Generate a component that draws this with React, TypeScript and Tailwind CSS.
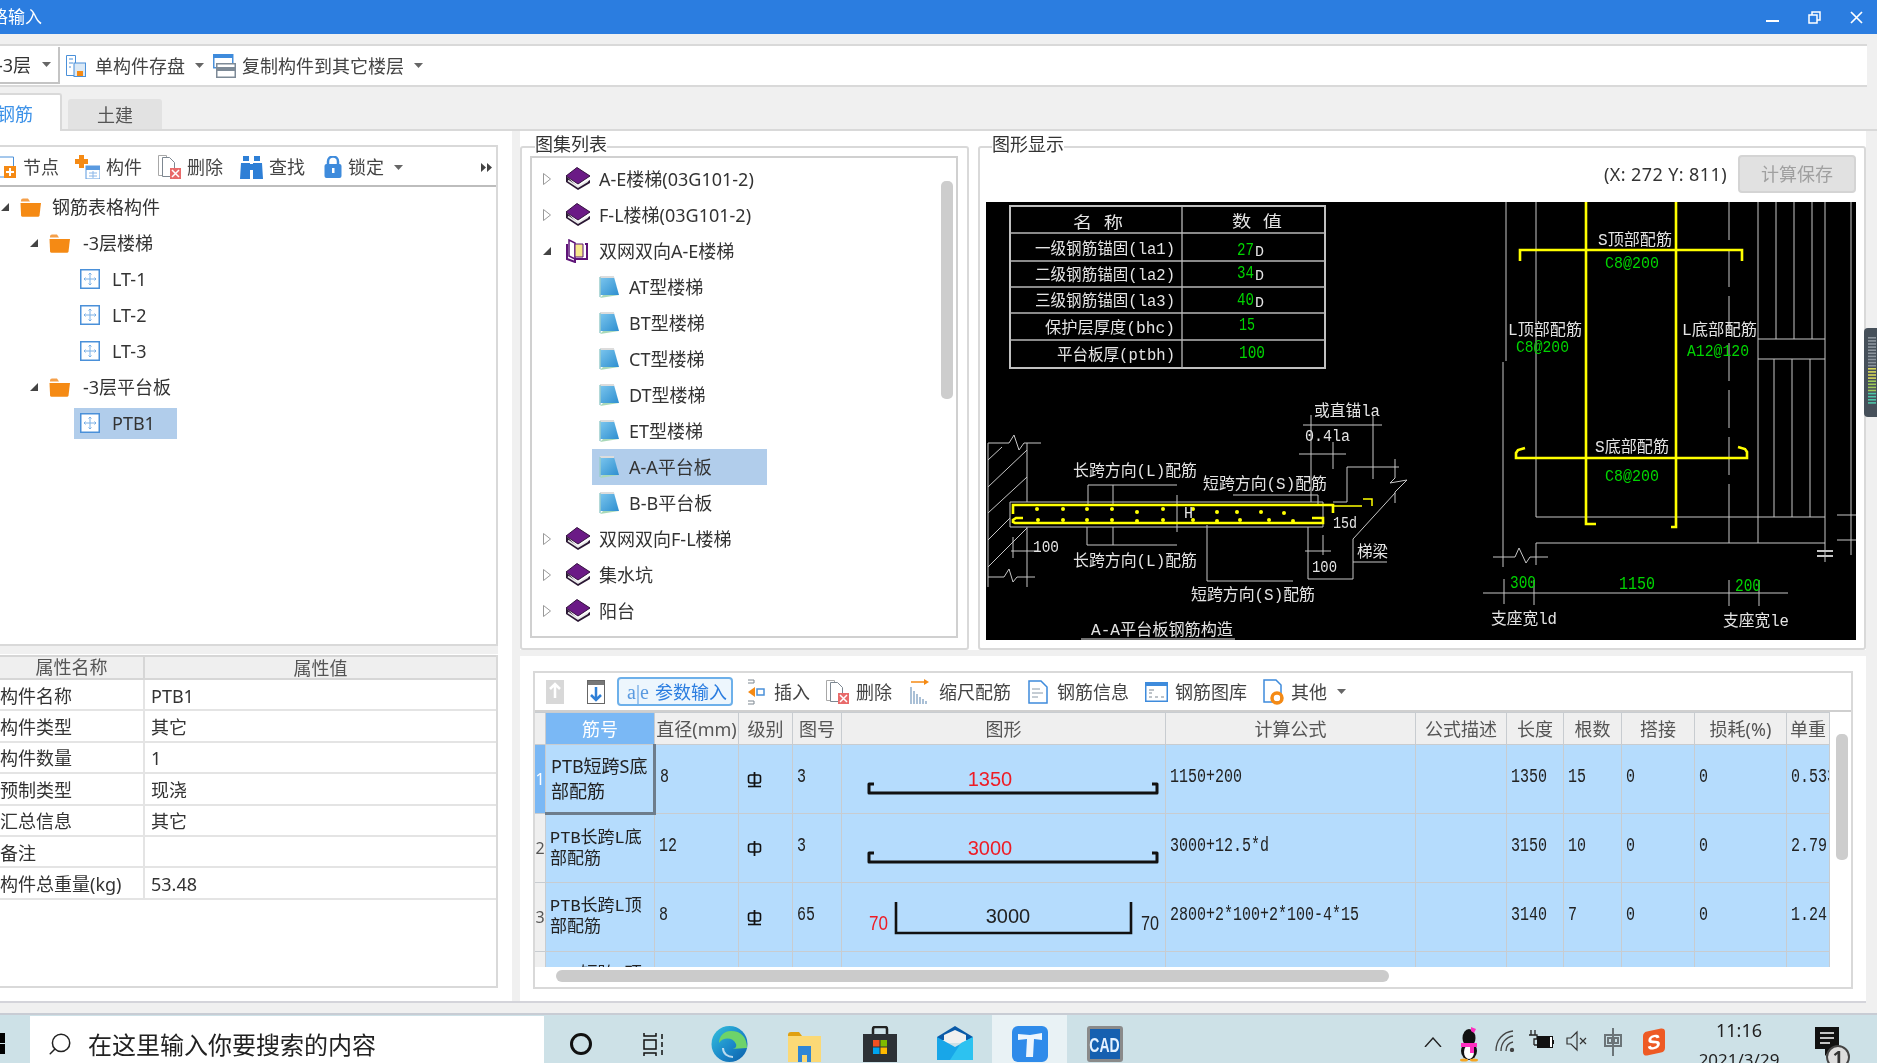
import { Search } from "lucide-react";

const Caret = ({ className = "" }: { className?: string }) => (
  <svg width="9" height="5" viewBox="0 0 9 5" className={className}>
    <path d="M0 0h9L4.5 5z" fill="#666" />
  </svg>
);

const FolderIcon = () => (
  <svg width="22" height="19" viewBox="0 0 22 19" className="shrink-0">
    <path d="M1 2.5Q1 0.5 3 0.5h5l2 3h-9z" fill="#f5a04a" />
    <path d="M0.5 5h20.5l-1.5 12.5q-.2 1.3-1.5 1.3H2.5q-1.2 0-1.4-1.3z" fill="#f58a14" />
  </svg>
);

const ComponentIcon = () => (
  <svg width="20" height="20" viewBox="0 0 20 20" className="shrink-0">
    <rect x="0.75" y="0.75" width="18.5" height="18.5" fill="#fff" stroke="#4a90d9" strokeWidth="1.5" />
    <path d="M10 4v12M4 10h12M8.5 5.5 10 4l1.5 1.5M8.5 14.5 10 16l1.5-1.5M5.5 8.5 4 10l1.5 1.5M14.5 8.5 16 10l-1.5 1.5" fill="none" stroke="#7ab0e6" strokeWidth="1" />
  </svg>
);

const BookIcon = () => (
  <svg width="26" height="24" viewBox="0 0 26 24" className="shrink-0">
    <path d="M12 0.5 25 9 13 17 1 9z" fill="#6b1a86" stroke="#34123f" />
    <path d="M1 9v6l12 8 12-7v-3l-12 7z" fill="#2a1733" />
    <path d="M3 13.5 13 20l10-6" fill="none" stroke="#e8e8e8" strokeWidth="1.5" />
  </svg>
);

const OpenBookIcon = () => (
  <svg width="24" height="24" viewBox="0 0 24 24" className="shrink-0">
    <path d="M2 5v15l8 3v-3h12V5h-2" fill="none" stroke="#5e1478" strokeWidth="2" />
    <path d="M4 1l6 3v16l-6-3z" fill="#fff" stroke="#5e1478" strokeWidth="1.5" />
    <path d="M10 5h8v13h-8z" fill="#f7e98c" stroke="#5e1478" />
  </svg>
);

const NoteIcon = () => (
  <svg width="21" height="24" viewBox="0 0 21 24" className="shrink-0">
    <defs>
      <linearGradient id="noteFill" x1="0" y1="0" x2="1" y2="1">
        <stop offset="0" stopColor="#7cc6ee" />
        <stop offset="1" stopColor="#2e8fd0" />
      </linearGradient>
    </defs>
    <path d="M1 23 4 20h16z" fill="#a9d8b8" />
    <path d="M1 2h14l5 18H1z" fill="url(#noteFill)" />
    <path d="M1 2h14" stroke="#dcdcdc" strokeWidth="2" />
    <path d="M1 2v20" stroke="#9cc" strokeWidth="1.5" />
  </svg>
);

const SaveIcon = () => (
  <svg width="20" height="22" viewBox="0 0 20 22" className="shrink-0">
    <path d="M.5 .5h9v20h-9z" fill="#fff" stroke="#4a90d9" />
    <path d="M3 4h4M3 8h4M3 12h2" stroke="#4a90d9" />
    <rect x="8" y="8" width="11.5" height="13.5" fill="#dbe9f6" stroke="#4a90d9" />
    <rect x="11" y="16" width="6" height="5" fill="#f58a14" />
  </svg>
);

const CopyIcon = () => (
  <svg width="23" height="24" viewBox="0 0 23 24" className="shrink-0">
    <rect x=".75" y=".75" width="19" height="13" fill="#fff" stroke="#4a90d9" strokeWidth="1.5" />
    <rect x="0" y="0" width="20" height="4" fill="#3e8bdc" />
    <rect x="3.75" y="9.75" width="18.5" height="13.5" fill="#fff" stroke="#7d8a97" strokeWidth="1.5" />
    <rect x="3" y="13" width="20" height="4" fill="#7d8a97" />
  </svg>
);

const NodeIcon = () => (
  <svg width="24" height="22" viewBox="0 0 24 22" className="shrink-0 -ml-[7px]">
    <path d="M.5 1h20v20H.5z" fill="#fff" stroke="#4a90d9" />
    <rect x="11" y="10" width="12" height="12" fill="#f58a14" />
    <path d="M17 12v8M13 16h8" stroke="#fff" strokeWidth="2" />
  </svg>
);

const BuildIcon = () => (
  <svg width="25" height="24" viewBox="0 0 25 24" className="shrink-0">
    <path d="M4 0h5v4h4v5H9v4H4V9H0V4h4z" fill="#f58a14" />
    <rect x="11" y="11" width="14" height="13" fill="#fff" stroke="#5a9ae0" />
    <rect x="11" y="11" width="14" height="4" fill="#5a9ae0" />
    <path d="M14 18h8M14 21h8M18 16v7" stroke="#8ab6e8" />
  </svg>
);

const DeleteIcon = () => (
  <svg width="23" height="24" viewBox="0 0 23 24" className="shrink-0">
    <path d="M.5 .5h8v20h-8z" fill="#fff" stroke="#a8a8a8" />
    <path d="M4.5 2.5h7l5 5v14h-12z" fill="#fff" stroke="#7d8791" />
    <rect x="12" y="13" width="11" height="11" fill="#e86a6a" />
    <path d="M14 15l7 7M21 15l-7 7" stroke="#fff" strokeWidth="1.5" />
  </svg>
);

const FindIcon = () => (
  <svg width="23" height="23" viewBox="0 0 23 23" className="shrink-0">
    <path d="M3 0h6v5H3zM14 0h6v5h-6zM1 7h9v16H0zM13 7h9l1 16h-10z" fill="#2e7fd6" />
    <rect x="9" y="8" width="5" height="6" fill="#2e7fd6" />
  </svg>
);

const LockIcon = () => (
  <svg width="18" height="22" viewBox="0 0 18 22" className="shrink-0">
    <path d="M4 9V5.5a5 5 0 0 1 10 0V9" fill="none" stroke="#3e8bdc" strokeWidth="2.5" />
    <rect x="0.5" y="8" width="17" height="14" rx="2" fill="#3e8bdc" />
    <rect x="8" y="12" width="2.5" height="5" fill="#fff" />
  </svg>
);

const InsertIcon = () => (
  <svg width="19" height="26" viewBox="0 0 19 26" className="shrink-0">
    <path d="M2 1h6v3H2M2 22h6v3H2" fill="none" stroke="#7d8791" />
    <path d="M9 8 2 13l7 5v-3h0v-4z" fill="#f58a14" />
    <rect x="11" y="10" width="7" height="6" fill="#fff" stroke="#4a90d9" strokeWidth="1.5" />
  </svg>
);

const ScaleIcon = () => (
  <svg width="20" height="26" viewBox="0 0 20 26" className="shrink-0">
    <path d="M1 3h14" stroke="#f58a14" strokeWidth="1.5" />
    <path d="M14 0l5 3-5 3z" fill="#f58a14" />
    <path d="M1 8v17M4 12v13M7 15v10M10 18v7M13 20v5M16 22v3" stroke="#7d9fc0" strokeWidth="1.3" />
  </svg>
);

const InfoIcon = () => (
  <svg width="20" height="24" viewBox="0 0 20 24" className="shrink-0">
    <path d="M1 1h12l6 6v16H1z" fill="#fff" stroke="#3e8bdc" strokeWidth="1.5" />
    <path d="M4 9h8M4 13h11M4 17h6" stroke="#8a9aa8" />
  </svg>
);

const LibraryIcon = () => (
  <svg width="23" height="20" viewBox="0 0 23 20" className="shrink-0">
    <rect x=".75" y=".75" width="21.5" height="18.5" fill="#fff" stroke="#3e8bdc" strokeWidth="1.5" />
    <rect x="0" y="0" width="23" height="4" fill="#3e8bdc" />
    <path d="M4 8h5M4 11h3M4 15h3M10 15h3M16 15h3" stroke="#7d8791" />
  </svg>
);

const OtherIcon = () => (
  <svg width="21" height="26" viewBox="0 0 21 26" className="shrink-0">
    <path d="M1 1h12l5 5v17H1z" fill="#fff" stroke="#3e8bdc" strokeWidth="1.5" />
    <circle cx="14" cy="19" r="5" fill="none" stroke="#f58a14" strokeWidth="3.5" />
  </svg>
);

const LeftTool = ({ icon, label, className = "" }: { icon: React.ReactNode; label: string; className?: string }) => (
  <div className={`flex items-center gap-[6px] whitespace-nowrap ${className}`}>
    {icon}
    <span>{label}</span>
  </div>
);

const RebarSymbol = ({ base }: { base: boolean }) => (
  <svg width="15" height="17" viewBox="0 0 15 17">
    <rect x="1.5" y="4" width="12" height="8" rx="2" fill="none" stroke="#111" strokeWidth="1.6" />
    <path d="M7.5 1v15" stroke="#111" strokeWidth="1.8" />
    {base && <path d="M1 15.5h13" stroke="#111" strokeWidth="1.6" />}
  </svg>
);

const HookBar = ({ label }: { label: string }) => (
  <svg width="322" height="68" className="block font-['Liberation_Sans',sans-serif]">
    <text x="148" y="41" textAnchor="middle" fontSize="20" fill="#ee1c25">{label}</text>
    <path d="M32 39h-5v9h288v-9h-5" fill="none" stroke="#111" strokeWidth="3" strokeLinejoin="round" />
  </svg>
);

const UBar = () => (
  <svg width="322" height="68" className="block font-['Liberation_Sans',sans-serif]">
    <text x="27" y="47" fontSize="20" fill="#ee1c25" textLength="19" lengthAdjust="spacingAndGlyphs">70</text>
    <path d="M54 19v31h235V19" fill="none" stroke="#111" strokeWidth="2.6" />
    <text x="166" y="40" textAnchor="middle" fontSize="20" fill="#222">3000</text>
    <text x="299" y="47" fontSize="20" fill="#222" textLength="18" lengthAdjust="spacingAndGlyphs">70</text>
  </svg>
);

const CadText = ({ x, y, w, fill = "#e4e4e4", size = 16, children }: { x: number; y: number; w: number; fill?: string; size?: number; children: string }) => (
  <text x={x} y={y} fontSize={size} fill={fill} textLength={w} lengthAdjust="spacingAndGlyphs">
    {children}
  </text>
);

const GRAY = "#c6c6c6";
const GREEN = "#00d400";

const CadDrawing = () => {
  const topDots = [[51, 307], [77, 307], [101, 307], [126, 307], [151, 310], [177, 307], [207, 307], [231, 310], [251, 310], [275, 310], [298, 311]];
  const bottomDots = [[52, 318], [77, 318], [101, 318], [126, 318], [151, 319], [177, 318], [207, 318], [231, 319], [254, 318], [283, 318], [307, 319]];
  const grayPaths = [
    "M41 241v59M41 325v60M2 241h21l5-8 5 15 5-7h17M2 375h16l5-8 4 13 4-5h18M2 241v144",
    "M2 258l14-13M2 285l39-37M2 311l39-36M2 338l22-22M2 365l39-39",
    "M27 335v21M25 349h27M24 300h313v25H24z",
    "M102 303v-20h89M127 303v-20M247 293h85v10M191 293v37",
    "M101 325v18h90M127 325v18M221 323v56h86",
    "M322 325v52h45v-40l42-46M367 360h34M347 300h14v-35h52M409 257v19l-5 5 17-3-12 12v11",
    "M325 213v87M387 213v64M317 223h79M313 252h47M347 240v27M319 349h26M337 333v20",
    "M520 0v159M517 160v205M550 0v315h289M743 315v26M772 0v341M790 0v137M808 0v137M826 0v137M839 0v360",
    "M772 137h67M772 157h67M788 157v158M806 157v158M824 157v158M865 0v353M851 313h19M851 338h19",
    "M550 341h289M550 341v22M507 355h22l4-9 7 15 4-6h18M497 391h305M518 377v25M548 378v25M743 378v26M773 378v26",
  ];
  return (
    <svg viewBox="0 0 870 438" width="870" height="438" className="block font-['Liberation_Mono','Noto_Sans_CJK_SC',monospace]">
      <rect width="870" height="438" fill="#000" />
      <path d="M24 4h315v162H24z" fill="none" stroke="#c0c0c0" strokeWidth="2" />
      <path d="M196 4v162M24 31h315M24 59h315M24 85h315M24 111h315M24 138h315" fill="none" stroke="#b8b8b8" strokeWidth="1.3" />
      <CadText x={87} y={26} w={50}>名   称</CadText>
      <CadText x={246} y={25} w={50}>数   值</CadText>
      <CadText x={49} y={52} w={140}>一级钢筋锚固(la1)</CadText>
      <CadText x={49} y={78} w={140}>二级钢筋锚固(la2)</CadText>
      <CadText x={49} y={104} w={140}>三级钢筋锚固(la3)</CadText>
      <CadText x={59} y={131} w={130}>保护层厚度(bhc)</CadText>
      <CadText x={71} y={158} w={118}>平台板厚(ptbh)</CadText>
      <CadText x={251} y={53} w={17} size={18} fill={GREEN}>27</CadText>
      <CadText x={269} y={54} w={9} size={14}>D</CadText>
      <CadText x={251} y={76} w={17} size={18} fill={GREEN}>34</CadText>
      <CadText x={269} y={78} w={9} size={14}>D</CadText>
      <CadText x={251} y={103} w={17} size={18} fill={GREEN}>40</CadText>
      <CadText x={269} y={105} w={9} size={14}>D</CadText>
      <CadText x={253} y={128} w={16} size={18} fill={GREEN}>15</CadText>
      <CadText x={253} y={156} w={26} size={18} fill={GREEN}>100</CadText>

      <g fill="none" stroke={GRAY} strokeWidth="1">
        {grayPaths.map((d) => (
          <path key={d} d={d} />
        ))}
        <path d="M743 0v315" strokeDasharray="38 9" />
        <path d="M831 349h16M831 354h16" strokeWidth="2" />
      </g>

      <g fill="none" stroke="#ffff00" strokeWidth="2.6">
        <path d="M27 312v-9h320v8" />
        <path d="M37 316h-7l-3 2v2l2 1h308v-5h-11" />
        <path d="M347 304h29M377 297h9v7" strokeWidth="1.5" />
        <path d="M600 0v322h10M690 0v325h-5M534 59V48h222v11" />
        <path d="M539 246l-7 2-2 3v5h231v-6l-2-3-7-2" />
      </g>
      {[...topDots, ...bottomDots].map(([cx, cy]) => (
        <circle key={`${cx}-${cy}`} cx={cx} cy={cy} r="2" fill="#ffff00" />
      ))}

      <CadText x={328} y={214} w={66}>或直锚la</CadText>
      <CadText x={319} y={239} w={45}>0.4la</CadText>
      <CadText x={87} y={274} w={124}>长跨方向(L)配筋</CadText>
      <CadText x={217} y={287} w={124}>短跨方向(S)配筋</CadText>
      <CadText x={198} y={316} w={9}>H</CadText>
      <CadText x={347} y={326} w={24} size={17}>15d</CadText>
      <CadText x={47} y={350} w={26} size={17}>100</CadText>
      <CadText x={371} y={355} w={31}>梯梁</CadText>
      <CadText x={87} y={364} w={124}>长跨方向(L)配筋</CadText>
      <CadText x={326} y={370} w={25} size={17}>100</CadText>
      <CadText x={205} y={398} w={124}>短跨方向(S)配筋</CadText>
      <CadText x={105} y={433} w={142}>A-A平台板钢筋构造</CadText>
      <path d="M95 437h154" stroke="#e4e4e4" />

      <CadText x={612} y={43} w={74}>S顶部配筋</CadText>
      <CadText x={619} y={66} w={54} size={17} fill={GREEN}>C8@200</CadText>
      <CadText x={522} y={133} w={74}>L顶部配筋</CadText>
      <CadText x={530} y={150} w={53} size={17} fill={GREEN}>C8@200</CadText>
      <CadText x={696} y={133} w={75}>L底部配筋</CadText>
      <CadText x={701} y={154} w={62} size={17} fill={GREEN}>A12@120</CadText>
      <CadText x={609} y={250} w={74}>S底部配筋</CadText>
      <CadText x={619} y={279} w={54} size={17} fill={GREEN}>C8@200</CadText>
      <CadText x={524} y={386} w={26} size={18} fill={GREEN}>300</CadText>
      <CadText x={633} y={387} w={36} size={18} fill={GREEN}>1150</CadText>
      <CadText x={749} y={389} w={26} size={18} fill={GREEN}>200</CadText>
      <CadText x={505} y={422} w={66}>支座宽ld</CadText>
      <CadText x={737} y={424} w={66}>支座宽le</CadText>
    </svg>
  );
};

const openTri = (
  <svg width="8" height="8" viewBox="0 0 8 8" className="shrink-0">
    <path d="M8 0v8H0z" fill="#444" />
  </svg>
);
const closedTri = (
  <svg width="8" height="12" viewBox="0 0 8 12" className="shrink-0">
    <path d="M.5 .5 7.5 6 .5 11.5z" fill="#fff" stroke="#999" />
  </svg>
);

const atlasChildren = ["AT型楼梯", "BT型楼梯", "CT型楼梯", "DT型楼梯", "ET型楼梯", "A-A平台板", "B-B平台板"];
const props = [
  ["构件名称", "PTB1"],
  ["构件类型", "其它"],
  ["构件数量", "1"],
  ["预制类型", "现浇"],
  ["汇总信息", "其它"],
  ["备注", ""],
  ["构件总重量(kg)", "53.48"],
];
const columns = [
  { label: "筋号", w: "w-[109px]" },
  { label: "直径(mm)", w: "w-[84px]" },
  { label: "级别", w: "w-[54px]" },
  { label: "图号", w: "w-[49px]" },
  { label: "图形", w: "w-[324px]" },
  { label: "计算公式", w: "w-[250px]" },
  { label: "公式描述", w: "w-[91px]" },
  { label: "长度", w: "w-[57px]" },
  { label: "根数", w: "w-[58px]" },
  { label: "搭接", w: "w-[73px]" },
  { label: "损耗(%)", w: "w-[92px]" },
  { label: "单重", w: "w-[43px]" },
];
const rows = [
  { n: "1", name: ["PTB短跨S底", "部配筋"], d: "8", base: true, fig: "3", shape: <HookBar label="1350" />, formula: "1150+200", len: "1350", count: "15", unit: "0.533", h: "h-[69px]" },
  { n: "2", name: ["PTB长跨L底", "部配筋"], d: "12", base: false, fig: "3", shape: <HookBar label="3000" />, formula: "3000+12.5*d", len: "3150", count: "10", unit: "2.79", h: "h-[69px]" },
  { n: "3", name: ["PTB长跨L顶", "部配筋"], d: "8", base: true, fig: "65", shape: <UBar />, formula: "2800+2*100+2*100-4*15", len: "3140", count: "7", unit: "1.24", h: "h-[68px]" },
  { n: "4", name: ["PTB短跨S顶", "部配筋"], d: "8", base: true, fig: "3", shape: null, formula: "", len: "", count: "", unit: "", h: "h-[68px]" },
];

const cell = "border border-[#c8ccd0] px-[4px] overflow-hidden whitespace-nowrap";
const Val = ({ children }: { children: string }) => (
  <span className="relative -top-[2px] inline-block scale-y-[1.3]">{children}</span>
);

const EdgeIcon = () => (
  <svg width="37" height="36" viewBox="0 0 37 36">
    <defs>
      <linearGradient id="edgeFill" x1="0" y1="0" x2="1" y2="1">
        <stop offset="0" stopColor="#35c1dd" />
        <stop offset="0.55" stopColor="#1b88c9" />
        <stop offset="1" stopColor="#0c5ea8" />
      </linearGradient>
    </defs>
    <circle cx="18.5" cy="18" r="18" fill="url(#edgeFill)" />
    <path d="M36 22C36 11 30 5 20 5 12 5 8 11 8 17c4-6 14-6 17 1 1 3-1 5-5 5z" fill="#6ed36a" />
    <path d="M12 22c0 6 5 9 10 9" fill="none" stroke="#fff" strokeWidth="2" opacity=".7" />
  </svg>
);

const FolderTaskIcon = () => (
  <svg width="33" height="30" viewBox="0 0 33 30">
    <path d="M0 3q0-3 3-3h8l3 4H0z" fill="#e0a010" />
    <path d="M0 4h33v26H0z" fill="#fbd976" />
    <path d="M10 14h13v16h-4v-7h-5v7h-4z" fill="#2f86d6" />
  </svg>
);

const StoreIcon = () => (
  <svg width="36" height="36" viewBox="0 0 36 36">
    <path d="M11 8V3q0-2 2-2h10q2 0 2 2v5" fill="none" stroke="#222" strokeWidth="2.5" />
    <path d="M1 8h34v28H1z" fill="#2d3136" />
    <rect x="11" y="14" width="6.5" height="6.5" fill="#f25022" />
    <rect x="18.5" y="14" width="6.5" height="6.5" fill="#7fba00" />
    <rect x="11" y="21.5" width="6.5" height="6.5" fill="#00a4ef" />
    <rect x="18.5" y="21.5" width="6.5" height="6.5" fill="#ffb900" />
  </svg>
);

const MailIcon = () => (
  <svg width="36" height="34" viewBox="0 0 36 34">
    <path d="M0 11 18 0l18 11v3H0z" fill="#0a5aa8" />
    <path d="M7 9 18 4l11 5v8H7z" fill="#f0f0f0" />
    <path d="M0 11 18 21l18-10v23H0z" fill="#18a6e8" />
    <path d="M36 11v23H13L24 17z" fill="#2dc2f0" />
  </svg>
);

const TeklaIcon = () => (
  <svg width="36" height="36" viewBox="0 0 36 36">
    <rect width="36" height="36" rx="6" fill="#2f8bea" />
    <path d="M6 8l12 1 12-2v7l-8-1-1 18h-7l1-18-9 1z" fill="#eef6fd" />
  </svg>
);

const QqIcon = () => (
  <svg width="20" height="36" viewBox="0 0 20 36">
    <ellipse cx="10" cy="12" rx="6.5" ry="9" fill="#111" />
    <ellipse cx="10" cy="25" rx="8" ry="9" fill="#111" />
    <ellipse cx="10" cy="26" rx="5" ry="7" fill="#fff" />
    <path d="M2 17h16v4h-3v6h-4v-6H2z" fill="#ff2fc0" />
    <path d="M12 1l5 2-2 4-3-2z" fill="#ff2fc0" />
    <ellipse cx="5" cy="34" rx="4" ry="1.5" fill="#f5a623" />
    <ellipse cx="15" cy="34" rx="4" ry="1.5" fill="#f5a623" />
  </svg>
);

const levelBars = Array.from({ length: 22 }, (_, i) => i);

export default function App() {
  return (
    <div className="relative flex h-[1063px] w-[1877px] flex-col overflow-hidden bg-[#f0f0f0] font-['Noto_Sans','Noto_Sans_CJK_SC',sans-serif] text-[18px] leading-none text-[#333] blur-[0.4px]">
      <header className="flex h-[34px] shrink-0 items-center justify-between bg-[#2b7de0] text-white">
        <span className="-ml-[9px] -mt-[2px] text-[17px]">格输入</span>
        <div className="mr-[14px] flex items-center gap-[29px]">
          <svg width="13" height="13" viewBox="0 0 13 13">
            <path d="M0 10h13" stroke="#fff" strokeWidth="2" />
          </svg>
          <svg width="13" height="13" viewBox="0 0 13 13" fill="none" stroke="#fff" strokeWidth="1.5">
            <path d="M1 4h8v8H1zM4 4V1h8v8H9" />
          </svg>
          <svg width="13" height="13" viewBox="0 0 13 13">
            <path d="M1 1l11 11M12 1 1 12" stroke="#fff" strokeWidth="1.7" />
          </svg>
        </div>
      </header>

      <main className="flex min-h-0 flex-1 flex-col pt-[10px]">
        <div className="mr-[10px] flex h-[43px] shrink-0 items-center border-y-2 border-[#d9d9d9] bg-white">
          <div className="flex h-[37px] w-[60px] shrink-0 items-center overflow-hidden border-r-2 border-b-2 border-[#c4c4c4]">
            <span className="-ml-[3px]">-3层</span>
            <Caret className="ml-[11px]" />
          </div>
          <div className="ml-[6px]"><SaveIcon /></div>
          <span className="ml-[9px] text-[#444]">单构件存盘</span>
          <Caret className="ml-[10px]" />
          <div className="ml-[9px]"><CopyIcon /></div>
          <span className="ml-[6px] text-[#444]">复制构件到其它楼层</span>
          <Caret className="ml-[10px]" />
        </div>

        <div className="mt-[8px] flex h-[36px] shrink-0 items-end border-b-2 border-[#d9d9d9]">
          <div className="-mb-[2px] flex h-[38px] w-[62px] items-center overflow-hidden rounded-tr-[3px] border-r-2 border-t-2 border-[#d9d9d9] bg-white pt-[2px] text-[#3d92e8]">
            <span className="-ml-[3px]">钢筋</span>
          </div>
          <div className="ml-[6px] flex h-[30px] w-[94px] items-center justify-center rounded-t-[3px] bg-[#e2e2e2] pt-[2px] text-[#555]">土建</div>
        </div>

        <div className="mr-[11px] flex min-h-0 flex-1 border-b-2 border-[#d4d4da] bg-white">
          {/* left column */}
          <section className="flex w-[512px] shrink-0 flex-col bg-white pr-[14px] pt-[14px]">
            <div className="flex h-[501px] shrink-0 flex-col border-2 border-l-0 border-[#d9d9d9]">
              <div className="flex h-[40px] shrink-0 items-center border-b-2 border-[#bdbdbd] pt-[2px] text-[#444]">
                <LeftTool icon={<NodeIcon />} label="节点" />
                <LeftTool icon={<BuildIcon />} label="构件" className="ml-[16px]" />
                <LeftTool icon={<DeleteIcon />} label="删除" className="ml-[16px]" />
                <LeftTool icon={<FindIcon />} label="查找" className="ml-[17px]" />
                <LeftTool icon={<LockIcon />} label="锁定" className="ml-[19px]" />
                <Caret className="ml-[10px]" />
                <svg width="11" height="9" viewBox="0 0 11 9" className="ml-auto mr-[4px]">
                  <path d="M0 0l5 4.5L0 9zM6 0l5 4.5L6 9z" fill="#444" />
                </svg>
              </div>
              <div className="flex flex-col pt-[2px] text-[#333]">
                <div className="flex h-[36px] items-center pl-[1px]">
                  {openTri}
                  <div className="ml-[11px]"><FolderIcon /></div>
                  <span className="ml-[10px]">钢筋表格构件</span>
                </div>
                <div className="flex h-[36px] items-center pl-[30px]">
                  {openTri}
                  <div className="ml-[11px]"><FolderIcon /></div>
                  <span className="ml-[12px]">-3层楼梯</span>
                </div>
                {["LT-1", "LT-2", "LT-3"].map((name) => (
                  <div key={name} className="flex h-[36px] items-center pl-[80px]">
                    <ComponentIcon />
                    <span className="ml-[12px]">{name}</span>
                  </div>
                ))}
                <div className="flex h-[36px] items-center pl-[30px]">
                  {openTri}
                  <div className="ml-[11px]"><FolderIcon /></div>
                  <span className="ml-[12px]">-3层平台板</span>
                </div>
                <div className="flex h-[36px] items-center pl-[74px]">
                  <div className="flex h-[31px] w-[103px] items-center bg-[#b1cdeb] pl-[6px]">
                    <ComponentIcon />
                    <span className="ml-[12px]">PTB1</span>
                  </div>
                </div>
              </div>
            </div>
            <div className="h-[8px] shrink-0 bg-[#f0f0f0]" />
            <div className="mt-[1px] flex h-[333px] shrink-0 flex-col border-2 border-l-0 border-t-0 border-[#d9d9d9]">
              <div className="flex h-[25px] shrink-0 items-center border-y-2 border-[#d6d6d6] bg-[#efefef] text-[#555]">
                <span className="w-[145px] border-r-2 border-[#d6d6d6] text-center leading-[21px]">属性名称</span>
                <span className="flex-1 text-center">属性值</span>
              </div>
              {props.map(([name, value]) => (
                <div key={name} className="flex h-[31.4px] shrink-0 items-center border-b-2 border-[#e4e4e4]">
                  <span className="flex h-full w-[145px] items-center whitespace-nowrap border-r-2 border-[#e4e4e4] pt-[2px]">{name}</span>
                  <span className="pl-[6px] pt-[2px]">{value}</span>
                </div>
              ))}
            </div>
          </section>

          <div className="w-[8px] shrink-0 bg-[#f0f0f0]" />

          {/* right column */}
          <section className="flex min-w-0 flex-1 flex-col">
            <div className="flex h-[519px] shrink-0 gap-[9px] pt-[15px]">
              <div className="relative flex w-[449px] shrink-0 rounded-[3px] border-2 border-[#d9d9d9] p-[8px] pr-[9px]">
                <span className="absolute -top-[13px] left-[13px] bg-white">图集列表</span>
                <div className="relative h-[482px] w-full overflow-hidden border-2 border-[#d0d0d0]">
                  <div className="flex flex-col pt-[3px]">
                    {["A-E楼梯(03G101-2)", "F-L楼梯(03G101-2)"].map((name) => (
                      <div key={name} className="flex h-[36px] items-center pl-[11px]">
                        {closedTri}
                        <div className="ml-[14px]"><BookIcon /></div>
                        <span className="ml-[8px]">{name}</span>
                      </div>
                    ))}
                    <div className="flex h-[36px] items-center pl-[11px]">
                      {openTri}
                      <div className="ml-[14px]"><OpenBookIcon /></div>
                      <span className="ml-[10px]">双网双向A-E楼梯</span>
                    </div>
                    {atlasChildren.map((name) => (
                      <div key={name} className="flex h-[36px] items-center pl-[60px]">
                        <div className={`flex h-[36px] w-[175px] items-center pl-[7px] ${name === "A-A平台板" ? "bg-[#b1cdeb]" : ""}`}>
                          <NoteIcon />
                          <span className="ml-[9px]">{name}</span>
                        </div>
                      </div>
                    ))}
                    {["双网双向F-L楼梯", "集水坑", "阳台"].map((name) => (
                      <div key={name} className="flex h-[36px] items-center pl-[11px]">
                        {closedTri}
                        <div className="ml-[14px]"><BookIcon /></div>
                        <span className="ml-[8px]">{name}</span>
                      </div>
                    ))}
                  </div>
                  <div className="absolute right-[3px] top-[23px] h-[218px] w-[12px] rounded-[5px] bg-[#cdcdcd]" />
                </div>
              </div>

              <div className="relative flex min-w-0 flex-1 flex-col rounded-[3px] border-2 border-[#d9d9d9] pl-[6px]">
                <span className="absolute -top-[13px] left-[12px] bg-white">图形显示</span>
                <div className="flex h-[54px] shrink-0 items-center justify-end pb-[2px] pr-[8px]">
                  <span className="tracking-[0.4px] text-[#333]">(X: 272 Y: 811)</span>
                  <div className="ml-[11px] flex h-[38px] w-[118px] items-center justify-center rounded-[4px] border-2 border-[#d4d4d4] bg-[#e1e1e1] text-[#a0a0a0]">计算保存</div>
                </div>
                <CadDrawing />
              </div>
            </div>

            <div className="h-[6px] shrink-0 bg-[#f0f0f0]" />

            <div className="flex min-h-0 flex-1 flex-col px-[13px] pb-[12px] pt-[15px]">
              <div className="flex min-h-0 flex-1 flex-col border-2 border-[#d9d9d9]">
                <div className="flex h-[39px] shrink-0 items-center border-b-2 border-[#cfcfcf] text-[#444]">
                  <svg width="18" height="24" viewBox="0 0 18 24" className="ml-[11px] shrink-0">
                    <rect width="18" height="24" fill="#d8d8d8" />
                    <path d="M9 4v14M4 9l5-5 5 5" fill="none" stroke="#fff" strokeWidth="2.5" />
                  </svg>
                  <svg width="18" height="24" viewBox="0 0 18 24" className="ml-[23px] shrink-0">
                    <rect x=".5" y=".5" width="17" height="23" fill="#fff" stroke="#666" />
                    <rect x="1" y="1" width="16" height="4" fill="#777" />
                    <path d="M9 7v13M4 15l5 5 5-5" fill="none" stroke="#2e7fd6" strokeWidth="2.5" />
                  </svg>
                  <div className="ml-[12px] flex h-[29px] w-[116px] shrink-0 items-center rounded-[4px] border-2 border-[#6db0ea] bg-[#edf6fd] text-[#2b7de0]">
                    <span className="ml-[5px] flex w-[28px] items-center justify-center font-['Liberation_Serif',serif] text-[20px] text-[#5a9ae0]">a|e</span>
                    <span className="ml-[3px]">参数输入</span>
                  </div>
                  <LeftTool icon={<InsertIcon />} label="插入" className="ml-[13px] !gap-[9px]" />
                  <LeftTool icon={<DeleteIcon />} label="删除" className="ml-[16px] !gap-[7px]" />
                  <LeftTool icon={<ScaleIcon />} label="缩尺配筋" className="ml-[18px] !gap-[9px]" />
                  <LeftTool icon={<InfoIcon />} label="钢筋信息" className="ml-[17px] !gap-[9px]" />
                  <LeftTool icon={<LibraryIcon />} label="钢筋图库" className="ml-[16px] !gap-[7px]" />
                  <LeftTool icon={<OtherIcon />} label="其他" className="ml-[16px] !gap-[7px]" />
                  <Caret className="ml-[10px]" />
                </div>

                <div className="relative h-[255px] shrink-0 overflow-hidden">
                  <table className="-ml-[1px] w-[1295px] table-fixed border-collapse">
                    <colgroup>
                      <col className="w-[11px]" />
                      {columns.map((c) => (
                        <col key={c.label} className={c.w} />
                      ))}
                    </colgroup>
                    <thead>
                      <tr className="h-[32px] bg-[#efefef] text-[#555]">
                        <th className={`${cell} !px-0`} />
                        {columns.map((c, i) => (
                          <th key={c.label} className={`${cell} !px-0 text-center font-normal ${i === 0 ? "bg-[#7ab8f5] text-white" : ""}`}>
                            {c.label}
                          </th>
                        ))}
                      </tr>
                    </thead>
                    <tbody className="bg-[#b5dcfd] font-['Liberation_Mono','Noto_Sans_CJK_SC',monospace] text-[15px] text-[#222]">
                      {rows.map((r, i) => (
                        <tr key={r.n} className={r.h}>
                          <td className={`${cell} !px-0 text-center font-['Noto_Sans',sans-serif] text-[16px] ${i === 0 ? "bg-[#7ab8f5] text-white" : "bg-[#efefef] text-[#555]"}`}>{r.n}</td>
                          <td className={`${cell} !pl-[4px] text-[17px] leading-[21px] ${i === 0 ? "border-r-[3px] border-b-[3px] border-r-[#6d7d8c] border-b-[#6d7d8c] !pl-[5px] font-['Noto_Sans','Noto_Sans_CJK_SC',sans-serif] !text-[18px] !leading-[25px]" : ""} ${i === 3 ? "align-top !pt-[12px]" : ""}`}>
                            {r.name[0]}
                            <br />
                            {r.name[1]}
                          </td>
                          <td className={cell}>{i < 3 ? <Val>{r.d}</Val> : ""}</td>
                          <td className={`${cell} !px-[8px]`}>{i < 3 && <RebarSymbol base={r.base} />}</td>
                          <td className={cell}>{i < 3 ? <Val>{r.fig}</Val> : ""}</td>
                          <td className={`${cell} !p-0`}>{r.shape}</td>
                          <td className={cell}><Val>{r.formula}</Val></td>
                          <td className={cell} />
                          <td className={cell}><Val>{r.len}</Val></td>
                          <td className={cell}><Val>{r.count}</Val></td>
                          <td className={cell}>{i < 3 ? <Val>0</Val> : ""}</td>
                          <td className={cell}>{i < 3 ? <Val>0</Val> : ""}</td>
                          <td className={cell}><Val>{r.unit}</Val></td>
                        </tr>
                      ))}
                    </tbody>
                  </table>
                  <div className="absolute right-[3px] top-[22px] h-[126px] w-[12px] rounded-[5px] bg-[#cdcdcd]" />
                </div>

                <div className="flex min-h-0 flex-1 items-start pl-[21px] pt-[3px]">
                  <div className="h-[12px] w-[833px] rounded-[6px] bg-[#cbcbcb]" />
                </div>
              </div>
            </div>
          </section>
        </div>

        <div className="h-[10px] shrink-0" />
      </main>

      {/* taskbar */}
      <footer className="relative flex h-[50px] shrink-0 items-start overflow-hidden border-t-2 border-[#c8ccd4] bg-[#cde1e7]">
        <div className="mt-[18px] grid w-[5px] shrink-0 grid-cols-1 gap-[1px]">
          <div className="h-[10px] bg-black" />
          <div className="h-[10px] bg-black" />
        </div>
        <div className="ml-[25px] mt-[1px] flex h-[50px] w-[514px] shrink-0 items-start bg-white pt-[15px] text-[24px] text-[#222]">
          <Search size={26} strokeWidth={1.4} className="ml-[17px] -scale-x-100" />
          <span className="ml-[15px] mt-[2px] whitespace-nowrap">在这里输入你要搜索的内容</span>
        </div>
        <div className="flex h-[50px] shrink-0 items-start pt-[11px]">
          <div className="flex w-[75px] -translate-x-[1px] justify-center pt-[7px]">
            <div className="h-[22px] w-[22px] rounded-full border-[3px] border-[#111]" />
          </div>
          <div className="flex w-[73px] -translate-x-[2px] justify-center pt-[7px]">
            <svg width="24" height="23" viewBox="0 0 24 23" fill="none" stroke="#111" strokeWidth="1.5">
              <path d="M2 0v3h12V0M2 23v-3h12v3M2 7h12v9H2zM20 1v5M20 9v5M20 17v5" />
            </svg>
          </div>
          <div className="flex w-[75px] justify-center"><EdgeIcon /></div>
          <div className="flex w-[75px] justify-center pt-[6px]"><FolderTaskIcon /></div>
          <div className="flex w-[75px] justify-center"><StoreIcon /></div>
          <div className="flex w-[75px] justify-center"><MailIcon /></div>
          <div className="-mt-[11px] flex h-[50px] w-[75px] justify-center bg-[#e9f2f5] pt-[11px]"><TeklaIcon /></div>
          <div className="flex w-[75px] justify-center">
            <div className="flex h-[36px] w-[36px] items-center justify-center rounded-[3px] border-[3px] border-[#8a8a8a] bg-[#1660b0] font-['Liberation_Sans',sans-serif] text-[14px] font-bold text-[#e4f1ff]">
              <span className="inline-block scale-y-[1.5]">CAD</span>
            </div>
          </div>
        </div>
        <div className="absolute left-[1415px] top-0 flex h-[50px] items-start pt-[15px]">
          <div className="flex w-[36px] justify-center pt-[7px]">
            <svg width="18" height="10" viewBox="0 0 18 10" fill="none" stroke="#222" strokeWidth="1.4">
              <path d="M1 10 9 1l8 9" />
            </svg>
          </div>
          <div className="-mt-[4px] flex w-[36px] justify-center"><QqIcon /></div>
          <div className="flex w-[36px] justify-center">
            <svg width="20" height="22" viewBox="0 0 20 22" fill="none" stroke="#444" strokeWidth="1.3">
              <path d="M1 21C1 10 8 2 18 1M6 21C6 13 11 7 18 6M11 21C11 16 13 13 18 12" />
              <circle cx="17" cy="20" r="1.5" fill="#444" />
            </svg>
          </div>
          <div className="flex w-[36px] justify-center">
            <svg width="26" height="20" viewBox="0 0 26 20">
              <path d="M3 0v5M7 0v5M1 5h8v4H6v6M6 15h4" fill="none" stroke="#222" strokeWidth="1.3" />
              <rect x="9.5" y="6.5" width="15" height="11" fill="#fff" stroke="#111" />
              <rect x="10" y="7" width="12" height="10" fill="#111" />
              <rect x="24" y="10" width="2" height="4" fill="#111" />
            </svg>
          </div>
          <div className="flex w-[36px] justify-center">
            <svg width="22" height="22" viewBox="0 0 22 22" fill="none" stroke="#333" strokeWidth="1.2">
              <path d="M1 8h4l6-6v18l-6-6H1zM14 8l6 6M20 8l-6 6" />
            </svg>
          </div>
          <div className="-mt-[2px] flex w-[36px] justify-center">
            <svg width="18" height="28" viewBox="0 0 18 28" fill="none" stroke="#6b7478" strokeWidth="2">
              <path d="M9 0v28M1 7h16v11H1zM4 10v5h4v-5zM10 10v5h4v-5z" />
            </svg>
          </div>
          <div className="flex w-[46px] justify-center">
            <div className="flex h-[24px] w-[22px] -skew-y-12 items-center justify-center rounded-[4px] bg-[#ee5a24] font-['Liberation_Sans',sans-serif] text-[20px] font-bold text-white">S</div>
          </div>
          <div className="-mt-[9px] flex w-[124px] flex-col items-center gap-[12px] whitespace-nowrap text-[#222]">
            <span className="text-[18px]">11:16</span>
            <span className="text-[17px]">2021/3/29</span>
          </div>
          <div className="relative -mt-[3px] flex w-[52px] justify-center">
            <svg width="24" height="30" viewBox="0 0 24 30">
              <path d="M0 0h24v22h-8l-6 7v-7H0z" fill="#111" />
              <path d="M5 6h14M5 11h14M5 16h10" stroke="#fff" strokeWidth="1.5" />
            </svg>
            <span className="absolute left-[25px] top-[18px] flex h-[24px] w-[24px] items-center justify-center rounded-full border-2 border-[#444] bg-[#ddd] text-[18px] font-bold">1</span>
          </div>
        </div>
      </footer>

      {/* level widget docked on the right edge */}
      <div className="absolute left-[1864px] top-[328px] flex h-[89px] w-[13px] justify-end rounded-l-[4px] bg-[#46505a] pr-[1px] pt-[9px]">
        <svg width="8" height="70" viewBox="0 0 8 70">
          {levelBars.map((i) => (
            <rect key={i} y={i * 3.1} width="8" height="1.6" fill={i < 10 ? "#8d969e" : i < 14 ? "#d8d85a" : i < 18 ? "#9ecb5a" : "#4fc6a8"} />
          ))}
        </svg>
      </div>
    </div>
  );
}
